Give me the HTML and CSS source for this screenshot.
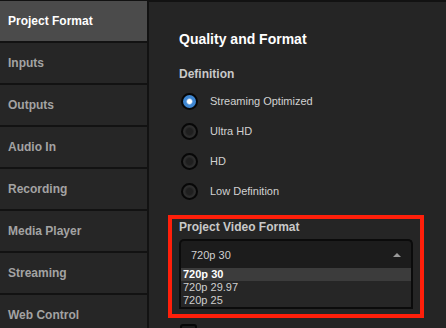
FILE: index.html
```html
<!DOCTYPE html>
<html lang="en">

<head>
  <meta charset="UTF-8">
  <meta name="viewport" content="width=device-width, initial-scale=1.0">
  <title>Project Format</title>
  <link rel="stylesheet" href="styles.css">
</head>

<body>
  <div class="layout">
    <ul class="sidebar">
      <li class="nav-item active">Project Format</li>
      <li class="nav-item">Inputs</li>
      <li class="nav-item">Outputs</li>
      <li class="nav-item">Audio In</li>
      <li class="nav-item">Recording</li>
      <li class="nav-item">Media Player</li>
      <li class="nav-item">Streaming</li>
      <li class="nav-item">Web Control</li>
    </ul>

    <div class="content">
      <h1>Quality and Format</h1>
      <h2>Definition</h2>
      <div class="radio-list">
        <div class="radio-row"><span class="radio checked"></span>Streaming Optimized</div>
        <div class="radio-row"><span class="radio"></span>Ultra HD</div>
        <div class="radio-row"><span class="radio"></span>HD</div>
        <div class="radio-row"><span class="radio"></span>Low Definition</div>
      </div>

      <div class="highlight">
        <h2>Project Video Format</h2>
        <div class="select">
          <div class="select-head">
            <span>720p 30</span>
            <span class="arrow"></span>
          </div>
          <ul class="select-list">
            <li class="selected">720p 30</li>
            <li>720p 29.97</li>
            <li>720p 25</li>
          </ul>
        </div>
      </div>

      <div class="checkbox"></div>
    </div>
  </div>
</body>

</html>
```

FILE: styles.css
```css
body {
  margin: 0;
  padding: 0;
  background-color: #121212;
  font-family: "Liberation Sans", Arial, sans-serif;
  overflow: hidden;
}

.layout {
  display: flex;
  height: 328px;
}

.sidebar {
  list-style: none;
  margin: 0;
  padding: 1px 0 0 0;
  width: 149px;
  flex-shrink: 0;
}

.nav-item {
  width: 147px;
  height: 40px;
  margin-bottom: 2px;
  box-sizing: border-box;
  padding-left: 8px;
  display: flex;
  align-items: center;
  background-color: #262626;
  color: #a3a3a3;
  font-size: 12px;
  font-weight: bold;
}

.nav-item.active {
  background-color: #4b4b4b;
  color: #ffffff;
}

.content {
  flex: 1;
  margin-top: 2px;
  background-color: #252525;
  padding: 29px 33px 0 30px;
}

h1 {
  margin: 0;
  font-size: 14px;
  line-height: 16px;
  color: #ffffff;
}

h2 {
  margin: 20px 0 0 0;
  font-size: 12px;
  line-height: 14px;
  color: #c9c9c9;
}

.radio-list {
  margin-top: 5px;
}

.radio-row {
  height: 30px;
  display: flex;
  align-items: center;
  font-size: 11px;
  color: #d2d2d2;
}

.radio {
  width: 17px;
  height: 17px;
  box-sizing: border-box;
  margin: 0 12px 0 2px;
  border-radius: 50%;
  border: 2px solid #070707;
  background: radial-gradient(circle, #1f1f1f 0, #1f1f1f 3px, #2e2e2e 5px);
}

.radio.checked {
  background: radial-gradient(circle, #ffffff 0, #ffffff 2px, #3f87d2 3.5px);
}

.highlight {
  margin: 9px -11px 0 -11px;
  padding: 1px 7px 5px 7px;
  border: 4px solid #ff1f0a;
}

.highlight h2 {
  margin: 0;
}

.select {
  margin-top: 5px;
}

.select-head {
  height: 29px;
  box-sizing: border-box;
  border: 2px solid #0b0b0b;
  border-bottom: none;
  border-radius: 5px 5px 0 0;
  background-color: #1c1c1c;
  padding: 0 10px 0 10px;
  display: flex;
  justify-content: space-between;
  align-items: center;
  font-size: 11px;
  color: #cfcfcf;
}

.arrow {
  width: 0;
  height: 0;
  border-left: 4px solid transparent;
  border-right: 4px solid transparent;
  border-bottom: 4px solid #9a9a9a;
}

.select-list {
  list-style: none;
  margin: 0;
  padding: 0;
  border: 2px solid #0b0b0b;
  border-top: none;
  background-color: #262626;
}

.select-list li {
  height: 13px;
  line-height: 13px;
  padding-left: 2px;
  font-size: 11px;
  color: #cfcfcf;
}

.select-list li.selected {
  background-color: #3c3c3c;
  color: #ffffff;
  font-weight: bold;
}

.checkbox {
  margin: 6px 0 0 1px;
  width: 17px;
  height: 17px;
  box-sizing: border-box;
  border: 2px solid #070707;
  border-radius: 3px;
  background-color: #1c1c1c;
}
```
